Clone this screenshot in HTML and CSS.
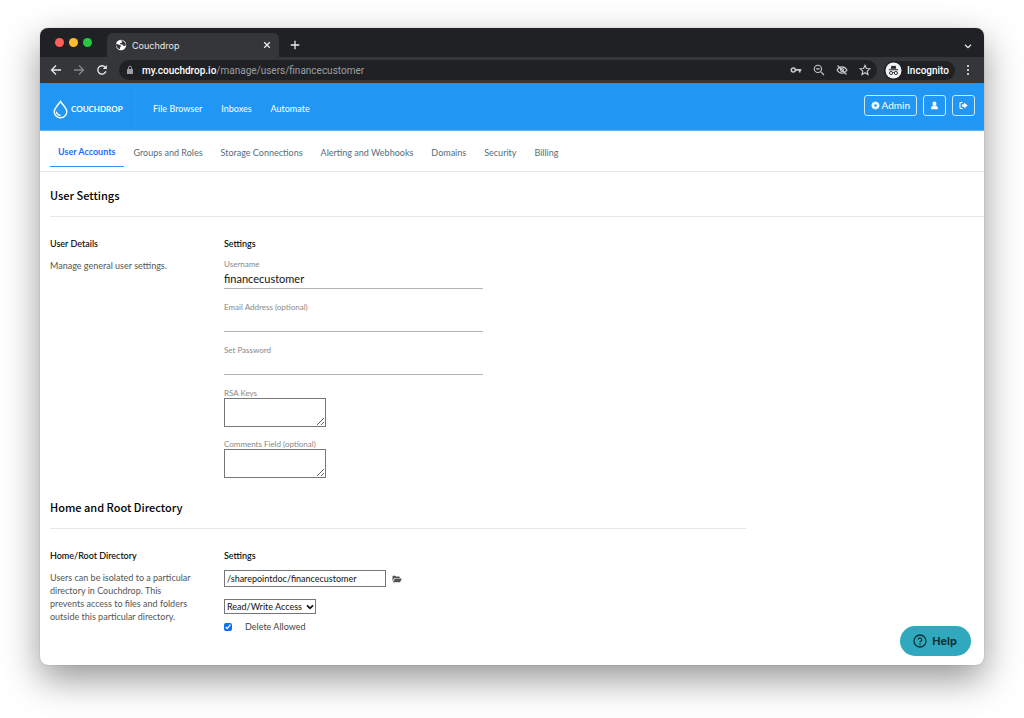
FILE: index.html
```html
<!DOCTYPE html>
<html lang="en">
<head>
<meta charset="utf-8">
<meta name="viewport" content="width=device-width, initial-scale=1">
<title>Couchdrop</title>
<link rel="stylesheet" href="styles.css">
</head>
<body>
<div class="window">
  <div class="tab-strip">
    <div class="lights"><span class="light red"></span><span class="light yellow"></span><span class="light green"></span></div>
    <div class="browser-tab">
      <svg class="globe" viewBox="0 0 12 12" aria-hidden="true"><circle cx="6" cy="6" r="5.2" fill="#fff"/><path d="M1.2 4.4 3 5.6l2.2.5.8 1.2-1 1.2v1.7L3 9.4 1.2 7zM5.4 1.6l1.9.9-.6 1.3-1.7.4.2 1 2 .3 1.2 1.2 1.9.2.5-2L9.3 3 7.6 1.5z" fill="#35363a"/></svg>
      <span class="tab-title">Couchdrop</span>
      <button class="plain close" aria-label="Close tab"><svg viewBox="0 0 8 8"><path d="M1.2 1.2l5.6 5.6M6.8 1.2 1.2 6.8"/></svg></button>
    </div>
    <button class="plain new-tab" aria-label="New tab"><svg viewBox="0 0 10 10"><path d="M5 .7v8.6M.7 5h8.6"/></svg></button>
    <button class="plain tab-search" aria-label="Search tabs"><svg viewBox="0 0 8 8"><path d="M1 2.7l3 3 3-3"/></svg></button>
  </div>
  <div class="toolbar">
    <button class="plain" aria-label="Back"><svg viewBox="0 0 12 12"><path d="M11 6H1.5M6 1.5 1.5 6 6 10.5"/></svg></button>
    <button class="plain dim" aria-label="Forward"><svg viewBox="0 0 12 12"><path d="M1 6h9.500M6 1.500 10.500 6 6 10.500"/></svg></button>
    <button class="plain" aria-label="Reload"><svg viewBox="0 0 12 12"><path d="M10 7.300A4.200 4.200 0 1 1 9.300 3.300"/><path d="M10.800 1v4H6.800z" fill="currentColor" stroke="none"/></svg></button>
    <div class="address">
      <svg class="lock" viewBox="0 0 8 10" aria-hidden="true"><rect x="1" y="4" width="6" height="5" rx=".6" fill="#9aa0a6"/><path d="M2.500 4.300V2.700a1.500 1.500 0 0 1 3 0v1.600" fill="none" stroke="#9aa0a6"/></svg>
      <span class="url"><b>my.couchdrop.io</b>/manage/users/financecustomer</span>
      <div class="address-icons">
        <svg viewBox="0 0 12 12" aria-label="Passwords"><circle cx="3.300" cy="6" r="2" stroke-width="1.500"/><path d="M5.300 5.900H11.300M9.700 6v2.600" stroke-width="1.700"/></svg>
        <svg viewBox="0 0 12 12" aria-label="Zoom"><circle cx="4.900" cy="4.900" r="3.600"/><path d="M7.600 7.600l3.400 3.400M3.200 4.900h3.400"/></svg>
        <svg viewBox="0 0 12 12" aria-label="Third-party cookies blocked"><path d="M1 6c1.200-2 3-3.100 5-3.100S9.800 4 11 6c-1.200 2-3 3.100-5 3.100S2.200 8 1 6zM1.500 1.500l9 9"/><circle cx="6" cy="6" r="1.500"/></svg>
        <svg viewBox="0 0 12 12" aria-label="Bookmark"><path d="M6 1.300l1.400 3.200 3.500.3-2.700 2.300.8 3.400L6 8.700l-3 1.800.8-3.400L1.100 4.800l3.500-.3z"/></svg>
      </div>
    </div>
    <div class="incognito">
      <svg viewBox="0 0 17 17" aria-hidden="true"><circle cx="8.500" cy="8.500" r="8" fill="#f1f3f4"/><path d="M5.700 6.800 6.500 3.800h1l1 .4 1-.4h1l.8 3zM3.800 7.300h9.400v.9H3.800z" fill="#202124"/><g fill="none" stroke="#202124" stroke-width=".9"><circle cx="6.100" cy="11" r="1.600"/><circle cx="10.900" cy="11" r="1.600"/><path d="M7.700 10.700q.8-.4 1.600 0"/></g></svg>
      <span>Incognito</span>
    </div>
    <button class="plain menu" aria-label="Menu"><svg viewBox="0 0 4 12"><g fill="currentColor" stroke="none"><circle cx="2" cy="2" r="1.100"/><circle cx="2" cy="6" r="1.100"/><circle cx="2" cy="10" r="1.100"/></g></svg></button>
  </div>

  <header class="app-header">
    <a class="brand" href="#">
      <svg viewBox="0 0 16 20" aria-hidden="true"><path d="M8 1.300C6 4.800 1.300 8.300 1.300 12.300a6.700 6.500 0 0 0 13.400 0C14.700 8.300 10 4.800 8 1.300z" fill="none" stroke="#fff" stroke-width="1.500"/><path d="M3.600 12.300c.3 2.200 2 3.800 4.500 4" fill="none" stroke="#fff" stroke-width="1.500"/></svg>
      <span>COUCHDROP</span>
    </a>
    <nav class="main-nav"><a href="#">File Browser</a><a href="#">Inboxes</a><a href="#">Automate</a></nav>
    <div class="actions">
      <button class="action"><svg viewBox="0 0 10 10" aria-hidden="true"><circle cx="5" cy="5" r="2.600" fill="none" stroke="#fff" stroke-width="2.200"/><path d="M5 .5v1.500M5 8v1.500M.5 5H2M8 5h1.500M1.800 1.800l1 1M7.200 7.200l1 1M8.200 1.800l-1 1M2.800 7.200l-1 1" stroke="#fff" stroke-width="2"/></svg>Admin</button>
      <button class="action" aria-label="Account"><svg viewBox="0 0 10 10" aria-hidden="true"><ellipse cx="5" cy="3" rx="2.200" ry="2.500" fill="#fff"/><path d="M1.200 9.300c0-2.800.8-3.800 2-4.100 1 1 2.600 1 3.600 0 1.200.3 2 1.300 2 4.100z" fill="#fff"/></svg></button>
      <button class="action" aria-label="Log out"><svg viewBox="0 0 10 10" aria-hidden="true"><path d="M4 1.600H2.200Q1.100 1.600 1.100 2.700v4.600q0 1.100 1.100 1.100H4" fill="none" stroke="#fff" stroke-width="1.200"/><path d="M3.300 3.700h2.500V1.600L9.600 5 5.800 8.400V6.300H3.300z" fill="#fff"/></svg></button>
    </div>
  </header>

  <nav class="sub-nav">
    <a class="active" href="#">User Accounts</a><a href="#">Groups and Roles</a><a href="#">Storage Connections</a><a href="#">Alerting and Webhooks</a><a href="#">Domains</a><a href="#">Security</a><a href="#">Billing</a>
  </nav>

  <main class="content">
    <section>
      <h1 class="title">User Settings</h1>
      <div class="row">
        <div class="about">
          <h2 class="subtitle">User Details</h2>
          <p class="text">Manage general user settings.</p>
        </div>
        <form class="fields">
          <h2 class="subtitle">Settings</h2>
          <div class="field"><label for="username">Username</label><input class="line-input" id="username" type="text" value="financecustomer"></div>
          <div class="field"><label for="email">Email Address (optional)</label><input class="line-input" id="email" type="email"></div>
          <div class="field"><label for="password">Set Password</label><input class="line-input" id="password" type="password"></div>
          <div class="field area"><label for="rsa">RSA Keys</label><textarea id="rsa"></textarea></div>
          <div class="field area"><label for="comments">Comments Field (optional)</label><textarea id="comments"></textarea></div>
        </form>
      </div>
    </section>
    <section class="directory">
      <h1 class="title">Home and Root Directory</h1>
      <div class="row">
        <div class="about">
          <h2 class="subtitle">Home/Root Directory</h2>
          <p class="text">Users can be isolated to a particular directory in Couchdrop. This prevents access to files and folders outside this particular directory.</p>
        </div>
        <form class="fields">
          <h2 class="subtitle">Settings</h2>
          <div class="path">
            <input type="text" aria-label="Directory" value="/sharepointdoc/financecustomer">
            <button class="plain" type="button" aria-label="Browse folders"><svg viewBox="0 0 10 8"><path d="M.5 6.300V1.500Q.5.700 1.200.700h2l.8.900h3q.8 0 .8.800v.6H3Q2.400 3 2 3.600z" fill="#555" stroke="none"/><path d="M.8 7.300 2.700 4q.2-.4.600-.4h6.200q.4 0 .2.400L8.200 6.900q-.2.400-.6.400z" fill="#555" stroke="none"/></svg></button>
          </div>
          <div class="select-wrap">
            <select aria-label="Access"><option>Read/Write Access</option><option>Read Only Access</option></select>
            <svg viewBox="0 0 8 6" aria-hidden="true"><path d="M1 1.300l3 3 3-3" fill="none" stroke="#111" stroke-width="1.700"/></svg>
          </div>
          <label class="check"><input type="checkbox" checked><span>Delete Allowed</span></label>
        </form>
      </div>
    </section>
  </main>

  <button class="help"><svg viewBox="0 0 14 14" aria-hidden="true"><circle cx="7" cy="7" r="6" fill="none" stroke="#0f3036" stroke-width="1.300"/><path d="M5.200 5.600a1.800 1.700 0 1 1 2.700 1.500Q7 7.600 7 8.400" fill="none" stroke="#0f3036" stroke-width="1.200"/><circle cx="7" cy="10.200" r=".8" fill="#0f3036"/></svg>Help</button>
</div>
</body>
</html>
```
FILE: styles.css
```css
* { box-sizing: border-box; }
body {
  margin: 0;
  min-height: 100vh;
  padding: 28px 40px 53px;
  display: flex;
  background: #fff;
  font: 9px/13px Lato, "Open Sans", sans-serif;
  color: #111;
}
h1, h2, p { margin: 0; }
a { color: inherit; text-decoration: none; }
button, input, select, textarea { font: inherit; color: inherit; margin: 0; }
svg { display: block; flex: none; }

.window {
  position: relative;
  flex: 1;
  min-width: 0;
  display: flex;
  flex-direction: column;
  overflow: hidden;
  border-radius: 8px;
  background: #fff;
  box-shadow: 0 0 1px rgba(0, 0, 0, .4), 0 14px 36px rgba(0, 0, 0, .42);
}

.plain { border: 0; padding: 0; background: none; color: #e8eaed; }
.plain svg { width: 12px; height: 12px; fill: none; stroke: currentColor; stroke-width: 1.3; }
.dim { color: #85888c; }

.tab-strip { display: flex; align-items: flex-end; height: 29px; padding-right: 12px; background: #202124; }
.lights { display: flex; gap: 5px; align-self: center; padding: 0 15px 0 15px; }
.light { width: 9px; height: 9px; border-radius: 50%; }
.red { background: #ff5f57; }
.yellow { background: #febc2e; }
.green { background: #28c840; }
.browser-tab {
  display: flex;
  align-items: center;
  gap: 5px;
  width: 172px;
  height: 24px;
  padding: 0 8px;
  border-radius: 6px 6px 0 0;
  background: #35363a;
  color: #e8eaed;
  font-family: Inter, sans-serif;
}
.globe { width: 12px; height: 12px; }
.tab-title { flex: 1; }
.close svg { width: 8px; height: 8px; }
.new-tab { margin: 0 auto 7px 11px; }
.new-tab svg { width: 10px; height: 10px; }
.tab-search { margin-bottom: 7px; }
.tab-search svg { width: 8px; height: 8px; }

.toolbar { display: flex; align-items: center; gap: 11px; height: 26px; padding: 0 14px 0 10px; background: #35363a; font: 10px/13px Roboto, sans-serif; }
.address { flex: 1; display: flex; align-items: center; height: 20px; padding: 0 6px 0 7px; border-radius: 10px; background: #202124; color: #9aa0a6; }
.lock { width: 8px; height: 10px; }
.url { margin-left: 8px; flex: 1; }
.url b { font-weight: 500; color: #fff; }
.address-icons { display: flex; gap: 11px; }
.address-icons svg { width: 12px; height: 12px; fill: none; stroke: #c8cbcf; stroke-width: 1.1; }
.incognito { display: flex; align-items: center; gap: 5px; height: 19px; margin-left: -4px; padding: 0 6px 0 1px; border-radius: 10px; background: #202124; color: #fff; font-weight: 500; }
.incognito svg { width: 17px; height: 17px; }
.menu svg { width: 4px; }

.app-header { display: flex; align-items: stretch; height: 48px; background: #2196f3; border-bottom: 1px solid #64b5f6; color: #fff; }
.brand { display: flex; align-items: center; gap: 3px; width: 96px; padding: 5px 0 0 13px; border-right: 1px solid #1ba1ef; font-size: 8px; font-weight: 700; }
.brand svg { width: 15px; height: 19px; }
.main-nav { display: flex; align-items: center; gap: 19px; padding: 3px 0 0 17px; }
.actions { display: flex; align-items: center; gap: 6px; margin-left: auto; padding: 0 9px 3px 0; }
.action { display: flex; align-items: center; gap: 2px; height: 21px; padding: 0 6px; border: 1px solid #cde7fc; border-radius: 3px; background: none; font-size: 10px; }
.action svg { width: 9px; height: 9px; }

.sub-nav { display: flex; gap: 2px; height: 41px; padding: 6px 10px 4px; border-bottom: 1px solid #e8e8e8; color: #546e7a; }
.sub-nav a { display: flex; align-items: center; padding: 0 8px; }
.sub-nav .active { border-bottom: 1px solid #3b8cff; color: #1473f5; font-weight: 700; }

.content { flex: 1; padding: 14px 0 24px 10px; }
.title { padding-bottom: 12px; border-bottom: 1px solid #e6e6e6; font: 500 11px/18px "Noto Sans CJK JP", sans-serif; color: #000; }
.directory { width: 696px; max-width: 100%; margin-top: 8px; }
.row { display: grid; grid-template-columns: 174px 1fr; padding-top: 20px; }
.subtitle { font-size: 9px; line-height: 13px; font-weight: 500; color: #000; }
.about { padding-right: 30px; }
.text { margin-top: 9px; color: #555; }
.field { display: flex; flex-direction: column; align-items: flex-start; margin-bottom: 13px; }
.subtitle + .field { margin-top: 9px; }
.field label { font-size: 8px; line-height: 10px; color: #888; }
.line-input { width: 259px; max-width: 100%; height: 20px; padding: 0 0 1px; border: 0; border-bottom: 1px solid #b4b4b4; font-size: 11px; background: none; }
.area { margin-bottom: 12px; }
.field textarea { width: 102px; height: 29px; border: 1px solid #767676; }
.path { display: flex; align-items: center; gap: 6px; margin-top: 8px; }
.path input { width: 162px; height: 17px; padding: 0 2px; border: 1px solid #767676; }
.path svg { width: 10px; height: 8px; }
.select-wrap { display: inline-grid; align-items: center; margin-top: 12px; }
.select-wrap > * { grid-area: 1 / 1; }
.select-wrap select { height: 15px; padding: 0 12px 0 2px; appearance: none; border: 1px solid #767676; border-radius: 0; background: #fff; }
.select-wrap svg { width: 8px; height: 6px; margin-right: 2px; justify-self: end; pointer-events: none; }
.check { display: flex; align-items: center; gap: 13px; margin-top: 6px; color: #444; }
.check input { width: 8px; height: 8px; accent-color: #0b6ff5; }

.help { position: absolute; right: 13px; bottom: 9px; display: flex; align-items: center; gap: 5px; height: 30px; padding: 0 14px 0 13px; border: 0; border-radius: 15px; background: #30a9bf; color: #0f3036; font: 700 11px/14px Inter, sans-serif; }
.help svg { width: 14px; height: 14px; }
```
